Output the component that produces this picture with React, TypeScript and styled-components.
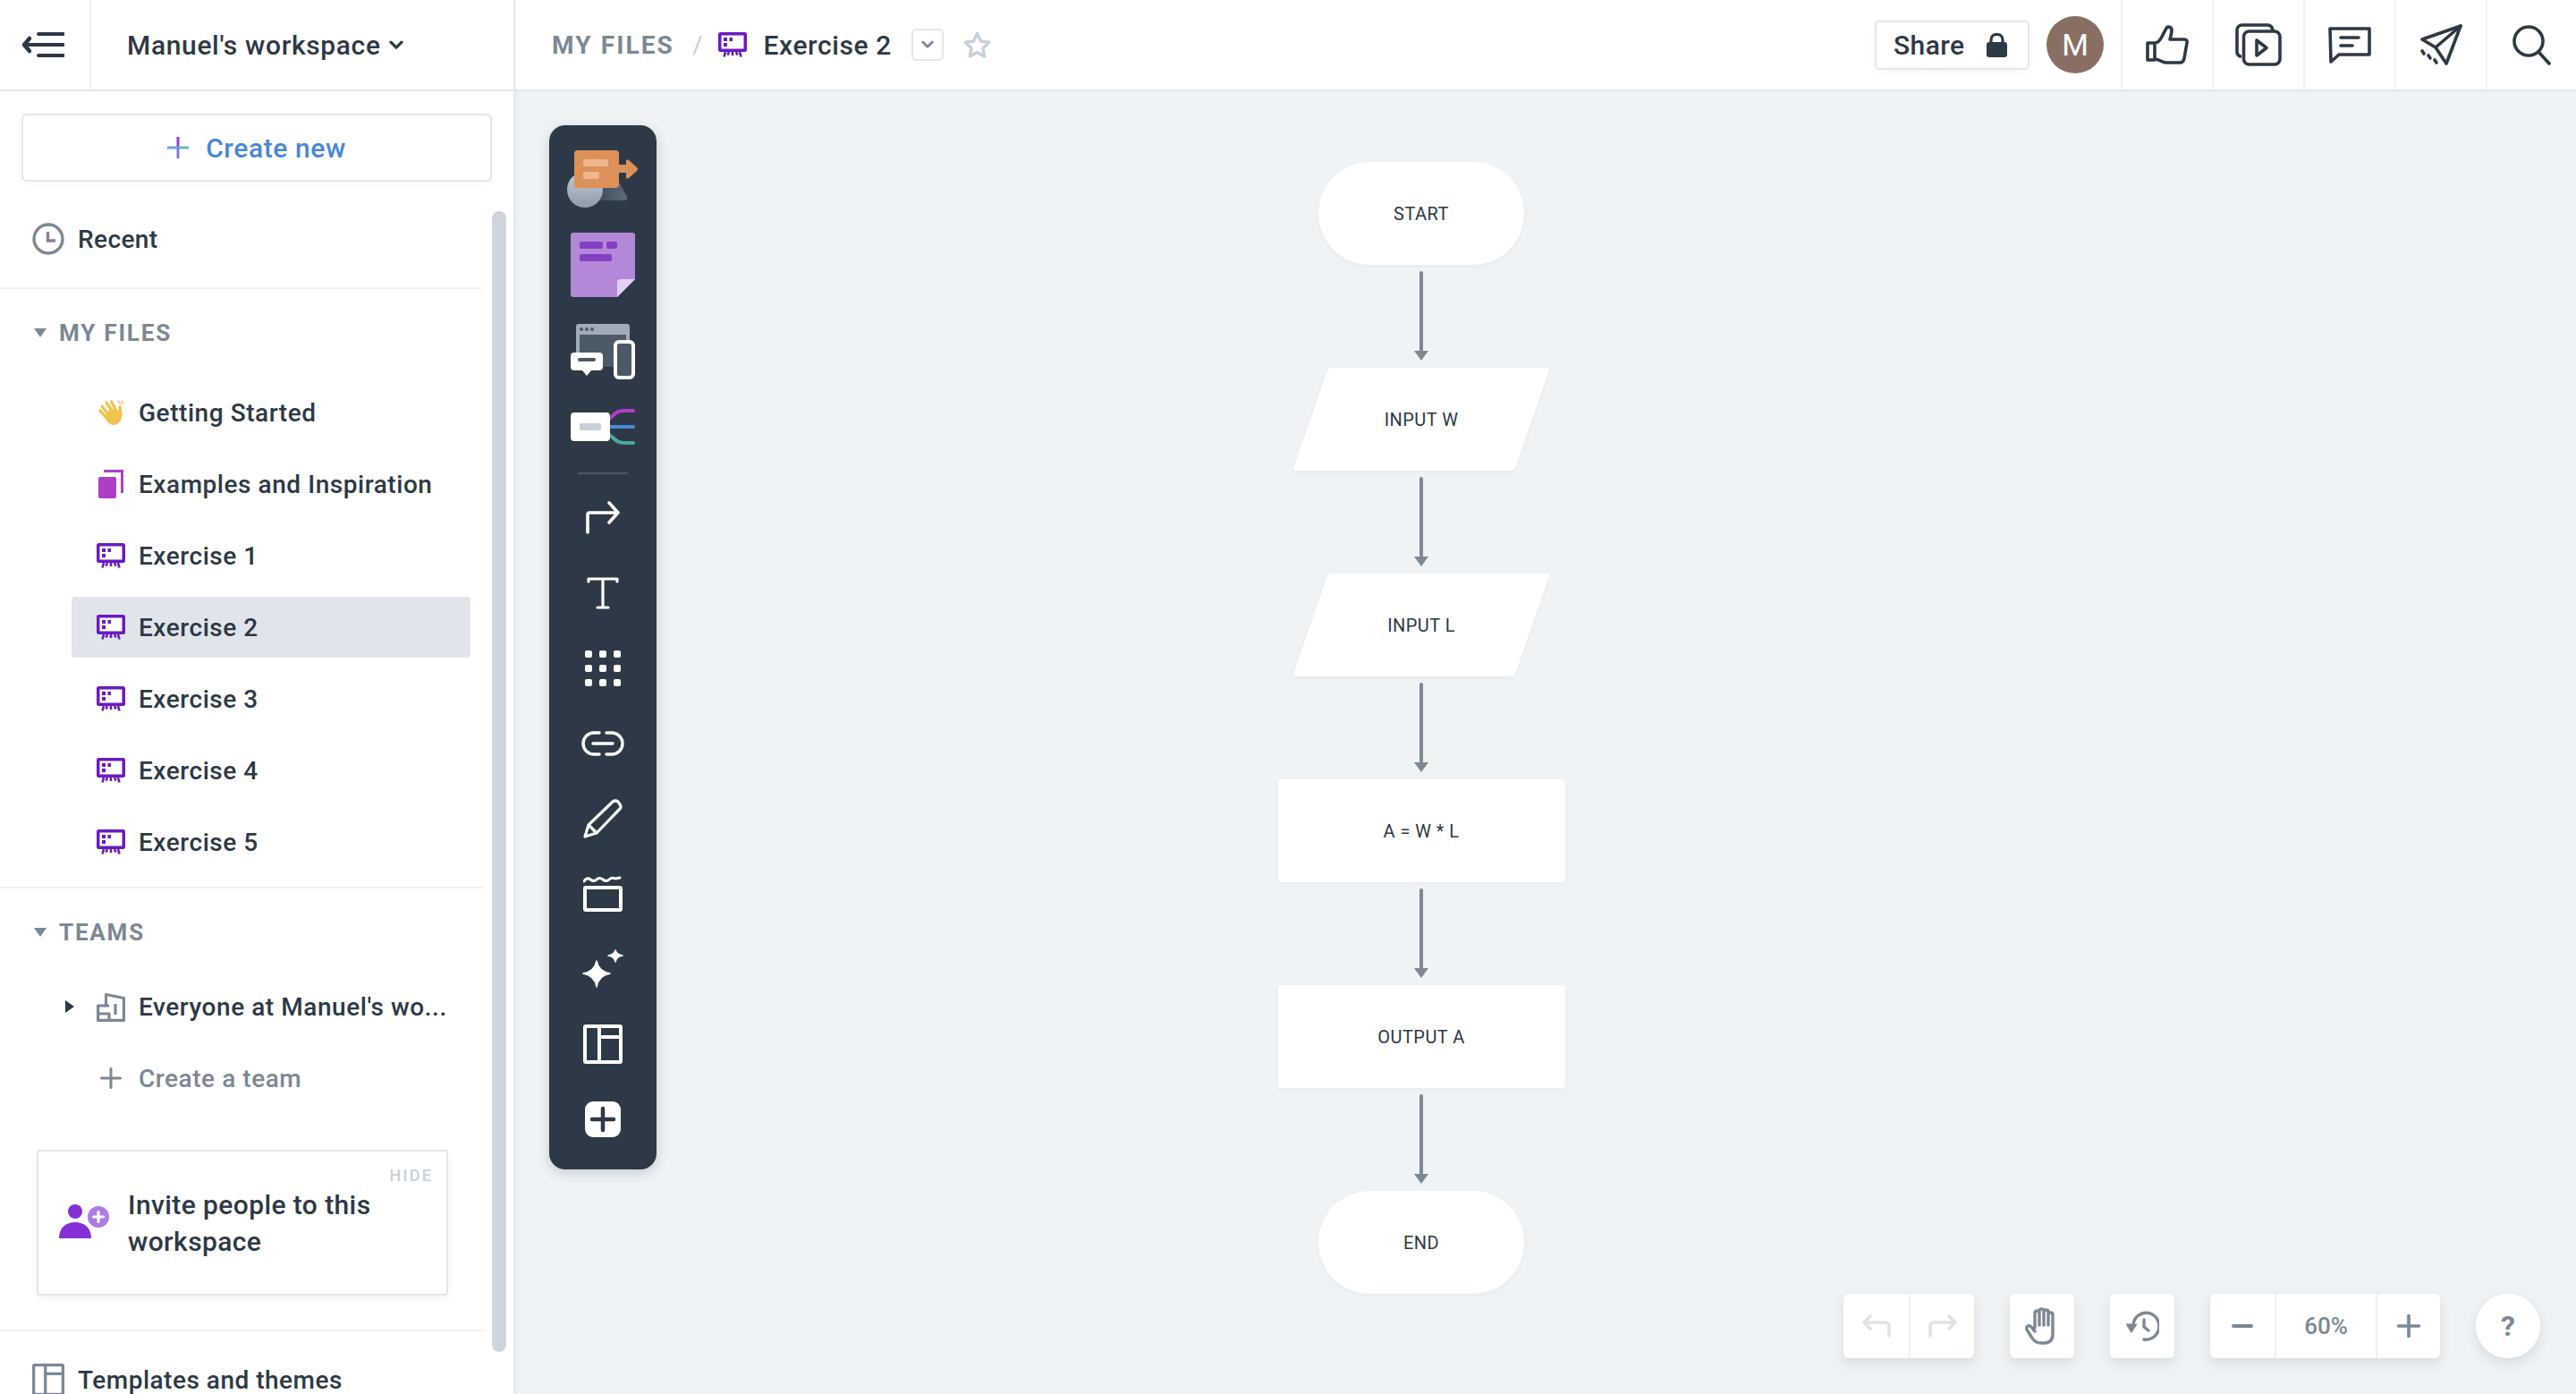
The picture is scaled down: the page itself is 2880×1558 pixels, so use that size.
import * as React from 'react'
import styled, { createGlobalStyle } from 'styled-components'

const ink = '#2d3946'
const gray = '#7c8895'
const line = '#e3e7ec'

const Global = createGlobalStyle`
  * { box-sizing: border-box; }
  html, body { margin: 0; padding: 0; background: #eff3f6; }
  body {
    font-family: Roboto, "Noto Sans", "Liberation Sans", sans-serif;
    color: ${ink};
    -webkit-font-smoothing: antialiased;
  }
  svg { display: block; flex: none; }
`

const Page = styled.div`
  display: flex;
  width: 2880px;
  height: 1558px;
  overflow: hidden;
`

/* ---------- sidebar ---------- */

const Sidebar = styled.aside`
  position: relative;
  z-index: 2;
  flex: none;
  width: 576px;
  height: 100%;
  overflow: hidden;
  background: #fff;
  border-right: 2px solid ${line};
  box-shadow: 2px 0 4px rgba(45, 57, 70, 0.05);
`

const SideHeader = styled.div`
  display: flex;
  height: 102px;
  border-bottom: 2px solid ${line};
`

const BackCell = styled.div`
  display: flex;
  align-items: center;
  width: 102px;
  padding-left: 24px;
  border-right: 2px solid #eef1f5;
`

const WorkspaceName = styled.div`
  display: flex;
  align-items: center;
  gap: 9px;
  padding-left: 40px;
  font-size: 30px;
  font-weight: 500;
  letter-spacing: 0.65px;
`

const CreateButton = styled.div`
  display: flex;
  align-items: center;
  justify-content: center;
  gap: 19px;
  width: 526px;
  height: 76px;
  margin: 25px 0 0 24px;
  border: 2px solid ${line};
  border-radius: 6px;
  background: #fff;
  box-shadow: 0 2px 6px rgba(45, 57, 70, 0.05);
  color: #4a86d8;
  font-size: 30px;
  font-weight: 500;
  letter-spacing: 0.6px;
`

const RecentRow = styled.div`
  display: flex;
  align-items: center;
  gap: 15px;
  width: 541px;
  height: 120px;
  padding: 10px 0 0 36px;
  border-bottom: 2px solid #f0f2f5;
  font-size: 28px;
  font-weight: 500;
  letter-spacing: 0.4px;
`

const SectionTitle = styled.div<{ $h: number; $pb?: number }>`
  display: flex;
  align-items: center;
  gap: 14px;
  height: ${(p) => p.$h}px;
  padding: 0 0 ${(p) => p.$pb ?? 0}px 38px;
  color: ${gray};
  font-size: 26px;
  font-weight: 700;
  letter-spacing: 1.8px;
`

const Caret = styled.span`
  width: 0;
  height: 0;
  border-left: 7px solid transparent;
  border-right: 7px solid transparent;
  border-top: 10px solid ${gray};
`

const FileList = styled.div<{ $ruled?: boolean }>`
  display: flex;
  flex-direction: column;
  gap: 12px;
  width: 541px;
  padding-bottom: ${(p) => (p.$ruled ? '16px' : '0')};
  border-bottom: ${(p) => (p.$ruled ? '2px solid #f0f2f5' : 'none')};
`

const FileRow = styled.div<{ $active?: boolean; $muted?: boolean }>`
  position: relative;
  display: flex;
  align-items: center;
  width: 446px;
  height: 68px;
  margin-left: 80px;
  padding-left: 28px;
  border-radius: 4px;
  background: ${(p) => (p.$active ? '#e0e5ec' : 'transparent')};
  color: ${(p) => (p.$muted ? gray : ink)};
  font-size: 28px;
  font-weight: 500;
  letter-spacing: 0.55px;
  white-space: nowrap;
`

const IconSlot = styled.span`
  display: flex;
  align-items: center;
  justify-content: center;
  width: 32px;
  margin-right: 15px;
`

const ExpandCaret = styled.span`
  position: absolute;
  left: -7px;
  top: 27px;
  width: 0;
  height: 0;
  border-top: 7px solid transparent;
  border-bottom: 7px solid transparent;
  border-left: 10px solid ${ink};
`

const InviteCard = styled.div`
  position: relative;
  display: flex;
  align-items: flex-start;
  gap: 21px;
  width: 460px;
  height: 163px;
  margin: 46px 0 38px 41px;
  padding: 39px 0 0 23px;
  border: 2px solid ${line};
  border-radius: 4px;
  box-shadow: 0 3px 8px rgba(45, 57, 70, 0.06);
  font-size: 30px;
  font-weight: 500;
  line-height: 41px;
  letter-spacing: 0.4px;
`

const HideLabel = styled.span`
  position: absolute;
  top: 16px;
  right: 15px;
  color: #c7d0db;
  font-size: 18px;
  font-weight: 500;
  line-height: 22px;
  letter-spacing: 2.2px;
`

const PeopleSlot = styled.div`
  padding-top: 20px;
`

const TemplatesRow = styled.div`
  display: flex;
  align-items: center;
  gap: 15px;
  width: 541px;
  height: 110px;
  padding-left: 36px;
  border-top: 2px solid #f0f2f5;
  font-size: 28px;
  font-weight: 500;
  letter-spacing: 0.5px;
`

const ScrollThumb = styled.div`
  position: absolute;
  left: 550px;
  top: 236px;
  width: 16px;
  height: 1275px;
  border-radius: 8px;
  background: #cfd5dd;
`

/* ---------- top bar ---------- */

const Main = styled.main`
  display: flex;
  flex: 1;
  flex-direction: column;
  min-width: 0;
`

const TopBar = styled.header`
  display: flex;
  flex: none;
  align-items: center;
  height: 102px;
  padding-left: 41px;
  background: #fff;
  border-bottom: 2px solid ${line};
  box-shadow: 0 2px 6px rgba(45, 57, 70, 0.06);
`

const Crumb = styled.span`
  color: ${gray};
  font-size: 28px;
  font-weight: 700;
  letter-spacing: 2.1px;
`

const Slash = styled.span`
  margin: 0 18px 0 20px;
  color: #c7d0db;
  font-size: 28px;
`

const DocTitle = styled.span`
  margin-left: 18px;
  font-size: 30px;
  font-weight: 500;
  letter-spacing: 0.6px;
`

const MenuBox = styled.span`
  display: flex;
  align-items: center;
  justify-content: center;
  width: 36px;
  height: 36px;
  margin: 0 22px;
  border: 2px solid ${line};
  border-radius: 5px;
`

const TopActions = styled.div`
  display: flex;
  align-items: center;
  height: 100%;
  margin-left: auto;
  margin-right: -1px;
`

const ShareButton = styled.div`
  display: flex;
  align-items: center;
  gap: 25px;
  width: 173px;
  height: 55px;
  padding-left: 19px;
  border: 2px solid ${line};
  border-radius: 5px;
  box-shadow: 0 2px 6px rgba(45, 57, 70, 0.05);
  font-size: 30px;
  font-weight: 500;
  letter-spacing: 0.4px;
`

const Avatar = styled.div`
  display: flex;
  align-items: center;
  justify-content: center;
  width: 64px;
  height: 64px;
  margin: 0 19px;
  border-radius: 50%;
  background: #896f63;
  color: #fff;
  font-size: 34px;
`

const ActionCell = styled.div`
  display: flex;
  align-items: center;
  justify-content: center;
  width: 102px;
  height: 100%;
  border-left: 2px solid #eef1f5;
`

/* ---------- canvas ---------- */

const Canvas = styled.section`
  position: relative;
  flex: 1;
  background: #eff3f6;
`

const Flow = styled.div`
  display: flex;
  flex-direction: column;
  align-items: center;
  width: 322px;
  margin-left: 852px;
  padding-top: 79px;
`

const Node = styled.div<{ $kind: 'pill' | 'rect' | 'para' }>`
  position: relative;
  display: flex;
  align-items: center;
  justify-content: center;
  flex: none;
  width: ${(p) => (p.$kind === 'pill' ? 230 : p.$kind === 'rect' ? 321 : 288)}px;
  height: 115px;
  border-radius: ${(p) => (p.$kind === 'pill' ? '58px' : '4px')};
  background: ${(p) => (p.$kind === 'para' ? 'transparent' : '#fff')};
  box-shadow: ${(p) => (p.$kind === 'para' ? 'none' : '0 2px 5px rgba(45, 57, 70, 0.04)')};
  font-size: 20px;
  font-weight: 400;
  letter-spacing: 0.45px;

  &::before {
    content: ${(p) => (p.$kind === 'para' ? "''" : 'none')};
    position: absolute;
    inset: 0 20px;
    border-radius: 4px;
    background: #fff;
    box-shadow: 0 2px 5px rgba(45, 57, 70, 0.04);
    transform: skewX(-19.2deg);
  }
`

const NodeLabel = styled.span`
  position: relative;
`

const ArrowSlot = styled.div`
  flex: none;
  height: 115px;
  padding-top: 7px;
`

const Toolbar = styled.nav`
  position: absolute;
  left: 38px;
  top: 38px;
  display: flex;
  flex-direction: column;
  align-items: center;
  width: 120px;
  height: 1167px;
  padding-top: 28px;
  border-radius: 18px;
  background: ${ink};
  box-shadow: 0 4px 14px rgba(45, 57, 70, 0.2);
`

const ToolSlot = styled.div<{ $h: number }>`
  display: flex;
  align-items: center;
  justify-content: center;
  flex: none;
  width: 100%;
  height: ${(p) => p.$h}px;
`

const ToolDivider = styled.div`
  flex: none;
  width: 56px;
  height: 2px;
  margin-bottom: 7px;
  background: #4c5a67;
`

const BottomTools = styled.div`
  position: absolute;
  right: 40px;
  bottom: 40px;
  display: flex;
  gap: 40px;
`

const ToolGroup = styled.div<{ $round?: boolean }>`
  display: flex;
  height: 72px;
  overflow: hidden;
  border-radius: ${(p) => (p.$round ? '50%' : '6px')};
  background: #fff;
  box-shadow: 0 6px 14px rgba(45, 57, 70, 0.12);
`

const ToolCell = styled.div<{ $w: number }>`
  display: flex;
  align-items: center;
  justify-content: center;
  width: ${(p) => p.$w}px;
  height: 100%;
  color: ${gray};
  font-size: 26px;
  font-weight: 500;

  & + & {
    border-left: 2px solid #eef1f5;
  }
`

const HelpMark = styled.span`
  color: ${gray};
  font-size: 32px;
  font-weight: 700;
`

/* ---------- icons ---------- */

const BackIcon = () => (
  <svg width="48" height="30" viewBox="0 0 48 30" fill="none" stroke={ink} strokeLinecap="round" strokeLinejoin="round">
    <path strokeWidth="4" d="M19 3H47M4 15H47M19 27H47" />
    <path strokeWidth="4.5" d="M9 8L3 15L9 22" />
  </svg>
)

const Chevron = ({ size = 16, color = ink }: { size?: number; color?: string }) => (
  <svg width={size} height={size * 0.65} viewBox="0 0 16 10" fill="none" stroke={color} strokeWidth="3.2" strokeLinecap="round" strokeLinejoin="round">
    <path d="M2 2L8 8L14 2" />
  </svg>
)

const RainbowPlus = () => (
  <svg width="24" height="24" viewBox="0 0 24 24">
    <rect x="10.5" y="0" width="3" height="12" fill="#8d3fd6" />
    <rect x="12" y="10.5" width="12" height="3" fill="#68bfae" />
    <rect x="0" y="10.5" width="12" height="3" fill="#6ea3e0" />
    <rect x="10.5" y="12" width="3" height="12" fill="#7c7af0" />
  </svg>
)

const ClockIcon = () => (
  <svg width="36" height="36" viewBox="0 0 36 36" fill="none" stroke={gray}>
    <circle cx="18" cy="18" r="16" strokeWidth="3.4" />
    <path strokeWidth="3.4" d="M17.5 10V20H26" />
  </svg>
)

const WaveIcon = () => (
  <svg width="30" height="30" viewBox="0 0 30 30" fill="none" stroke="#f2c44f" strokeWidth="3.4" strokeLinecap="round">
    <circle cx="18" cy="20" r="9" fill="#f2c44f" stroke="none" />
    <path d="M11 22L3 13M12 17L5 8M16 13L10 4M21 13L15.5 3M26 18L25 9" />
    <path d="M23 2L26 6M27 2L28.5 5" stroke="#e4ad3a" strokeWidth="1.2" />
  </svg>
)

const BookIcon = () => (
  <svg width="28" height="32" viewBox="0 0 28 32">
    <path d="M6 0H28V26H25V3H6Z" fill="#ad3fc7" />
    <rect x="0" y="8" width="20" height="24" rx="2" fill="#ad3fc7" />
  </svg>
)

const BoardIcon = () => (
  <svg width="32" height="28" viewBox="0 0 32 28">
    <rect x="0" y="0" width="32" height="22" rx="2.5" fill="#6a1bc1" />
    <rect x="3.5" y="3.5" width="25" height="15" fill="#fff" />
    <path d="M6 6H10V10H6ZM12.5 6H16V10H12.5ZM6 12H10V16H6Z" fill="#6a1bc1" />
    <path d="M8 22L6.5 27.5M16 22V26M24 22L25.5 27.5M12 22L10.5 25.5M20 22L21.5 25.5" stroke="#6a1bc1" strokeWidth="2.6" fill="none" />
  </svg>
)

const TeamIcon = () => (
  <svg width="32" height="33" viewBox="0 0 32 33" fill="none" stroke={gray} strokeWidth="3.2" strokeLinejoin="round">
    <path d="M1.6 31.4V15H10.5V2.5L30.4 6.5V31.4Z" />
    <path d="M1.6 24H14V31M14 15H8M21 13V25" />
  </svg>
)

const PlusIcon = ({ size = 24, color = gray, width = 3 }: { size?: number; color?: string; width?: number }) => (
  <svg width={size} height={size} viewBox="0 0 24 24" fill="none" stroke={color} strokeWidth={width} strokeLinecap="round">
    <path d="M12 1.5V22.5M1.5 12H22.5" />
  </svg>
)

const PeopleIcon = () => (
  <svg width="56" height="38" viewBox="0 0 56 38">
    <circle cx="18" cy="8" r="8" fill="#8330d6" />
    <path d="M0 38C0 26 8 20 18 20C28 20 36 26 36 38Z" fill="#8330d6" />
    <circle cx="44" cy="14" r="12" fill="#ad7be3" />
    <path d="M44 8.5V19.5M38.5 14H49.5" stroke="#fff" strokeWidth="3.2" strokeLinecap="round" />
  </svg>
)

const TableIcon = ({ w, h, color, sw }: { w: number; h: number; color: string; sw: number }) => (
  <svg width={w} height={h} viewBox="0 0 44 44" fill="none" stroke={color} strokeWidth={sw} preserveAspectRatio="none">
    <rect x="2" y="2" width="40" height="40" rx="1" />
    <path d="M18 2V42M18 14H42" />
  </svg>
)

const StarIcon = () => (
  <svg width="31" height="31" viewBox="0 0 31 31" fill="none" stroke="#c7d0db" strokeWidth="3.4" strokeLinejoin="round">
    <path d="M15.5 2.5L19.5 11L28.8 12.3L22 18.7L23.7 28L15.5 23.5L7.3 28L9 18.7L2.2 12.3L11.5 11Z" />
  </svg>
)

const LockIcon = () => (
  <svg width="23" height="27" viewBox="0 0 23 27">
    <path d="M5 12V7.5C5 3.5 8 1.5 11.5 1.5C15 1.5 18 3.5 18 7.5V12" fill="none" stroke={ink} strokeWidth="3.2" />
    <rect x="0" y="10" width="23" height="17" rx="3" fill={ink} />
  </svg>
)

const stroke = { fill: 'none', stroke: ink, strokeWidth: 3.6, strokeLinecap: 'round', strokeLinejoin: 'round' } as const

const ThumbIcon = () => (
  <svg width="48" height="44" viewBox="0 0 48 44" {...stroke}>
    <path d="M10 20H2V39H10M10 20C14 20 16 17 18 13L23 3.5C24.5 1 29 2 29 6C29 9 28 12 27 16H43C45.5 16 46.5 17.5 46 20L43 37C42.5 40.5 41 42 38 42H23C18 42 15 38 10 38Z" />
  </svg>
)

const VideoIcon = () => (
  <svg width="52" height="48" viewBox="0 0 52 48" {...stroke}>
    <path d="M5.5 37C3 36 2 34.5 2 32V8C2 4.5 4 2 8 2H36C39.5 2 41.5 4.5 42 8" />
    <rect x="9.5" y="9" width="40.5" height="37" rx="6" />
    <path d="M24 19V36L35 27.5Z" />
  </svg>
)

const CommentIcon = () => (
  <svg width="48" height="42" viewBox="0 0 48 42" {...stroke}>
    <path d="M2 3H46V32H12L3 40Z" />
    <path d="M14 13H34M14 22H27" />
  </svg>
)

const PlaneIcon = () => (
  <svg width="48" height="46" viewBox="0 0 48 46" {...stroke}>
    <path d="M46 2L3 17L18 26L30 44Z" />
    <path d="M46 2L18 26" />
    <path d="M3 30L5 33M10 35L12 38M17 40L19 43" />
  </svg>
)

const SearchIcon = () => (
  <svg width="44" height="45" viewBox="0 0 44 45" {...stroke}>
    <circle cx="18" cy="18" r="16" />
    <path d="M30 31L41 43" />
  </svg>
)

const FlowArrow = () => (
  <svg width="16" height="100" viewBox="0 0 16 100">
    <rect x="6" y="0" width="4" height="90" rx="2" fill={gray} />
    <path d="M0 89H16L8 100Z" fill={gray} strokeLinejoin="round" />
  </svg>
)

const ShapesTool = () => (
  <svg width="80" height="64" viewBox="0 0 80 64">
    <defs>
      <linearGradient id="circ" x1="0" y1="0" x2="0" y2="1">
        <stop offset="0" stopColor="#c0cad3" />
        <stop offset="1" stopColor="#8f9ca9" />
      </linearGradient>
      <linearGradient id="tri" x1="0" y1="0" x2="1" y2="0">
        <stop offset="0" stopColor="#3c4956" />
        <stop offset="1" stopColor="#5d6a77" />
      </linearGradient>
    </defs>
    <path d="M30 20H50L67 52Q68 56 64 56H30Z" fill="url(#tri)" />
    <circle cx="20" cy="44" r="20" fill="url(#circ)" />
    <path d="M56 16H66V12Q66 9 69 11L78 19Q80 21 78 23L69 31Q66 33 66 30V25H56Z" fill="#dd9159" />
    <rect x="8" y="0" width="50" height="42" rx="4" fill="#dd9159" />
    <rect x="18" y="10" width="28" height="8" rx="2" fill="#ecb78f" />
    <rect x="18" y="24" width="18" height="8" rx="2" fill="#ecb78f" />
  </svg>
)

const StickyTool = () => (
  <svg width="72" height="72" viewBox="0 0 72 72">
    <path d="M3 0H69Q72 0 72 3V52L52 72H3Q0 72 0 69V3Q0 0 3 0Z" fill="#b388d8" />
    <rect x="10" y="10" width="26" height="8" rx="2" fill="#8340c4" />
    <rect x="40" y="10" width="12" height="8" rx="2" fill="#8340c4" />
    <rect x="10" y="24" width="36" height="8" rx="2" fill="#8340c4" />
    <path d="M72 52L52 72V56Q52 52 56 52Z" fill="#e3cff2" />
  </svg>
)

const DevicesTool = () => (
  <svg width="72" height="62" viewBox="0 0 72 62">
    <rect x="6" y="0" width="60" height="48" rx="3" fill="#a0adb9" />
    <rect x="10" y="12" width="52" height="36" fill="#4c5a67" />
    <circle cx="12" cy="6" r="2" fill="#4c5a67" />
    <circle cx="18" cy="6" r="2" fill="#4c5a67" />
    <circle cx="24" cy="6" r="2" fill="#4c5a67" />
    <rect x="50" y="20" width="20" height="40" rx="4" fill="#4c5a67" stroke="#fff" strokeWidth="4" />
    <rect x="56" y="18" width="8" height="4" rx="2" fill="#fff" />
    <rect x="0" y="32" width="36" height="20" rx="4" fill="#fff" />
    <path d="M13 52H23L18 58Z" fill="#fff" />
    <rect x="8" y="38" width="20" height="4" rx="2" fill="#4c5a67" />
  </svg>
)

const MindTool = () => (
  <svg width="72" height="40" viewBox="0 0 72 40" fill="none" strokeWidth="4" strokeLinecap="round">
    <path d="M42 12C50 6 50 2 60 2H70" stroke="#ad3fc7" />
    <path d="M42 20H70" stroke="#4a86d8" />
    <path d="M42 28C50 34 52 38 60 38H70" stroke="#4aaaa0" />
    <rect x="0" y="4" width="44" height="32" rx="4" fill="#fff" stroke="none" />
    <rect x="10" y="16" width="24" height="8" rx="2" fill="#c7d0d9" stroke="none" />
  </svg>
)

const white = { fill: 'none', stroke: '#fff', strokeLinecap: 'round', strokeLinejoin: 'round' } as const

const ElbowTool = () => (
  <svg width="40" height="38" viewBox="0 0 40 38" {...white} strokeWidth="3.6">
    <path d="M3 35V15Q3 13 5 13H37M27 2L37 13L27 24" />
  </svg>
)

const TextTool = () => (
  <svg width="36" height="36" viewBox="0 0 36 36" {...white} strokeWidth="3.2">
    <path d="M2 5V2H34V5M18 2V34M12 34H24" />
  </svg>
)

const DotsTool = () => (
  <svg width="40" height="40" viewBox="0 0 40 40" fill="#fff">
    {[0, 16, 32].map((y) =>
      [0, 16, 32].map((x) => <rect key={`${x}-${y}`} x={x} y={y} width="8" height="8" rx="2" />)
    )}
  </svg>
)

const LinkTool = () => (
  <svg width="48" height="28" viewBox="0 0 48 28" {...white} strokeWidth="3.4">
    <path d="M20 2H14A12 12 0 0 0 14 26H20M28 2H34A12 12 0 0 1 34 26H28M13 14H35" />
  </svg>
)

const PencilTool = () => (
  <svg width="44" height="44" viewBox="0 0 44 44" {...white} strokeWidth="3.2">
    <path d="M2 42L6 29L33 3Q36 1 39 3L41 6Q43 9 41 11L15 38ZM6 29L15 38" />
  </svg>
)

const FrameTool = () => (
  <svg width="44" height="40" viewBox="0 0 44 40" fill="none" stroke="#fff">
    <path strokeWidth="3" strokeLinecap="round" d="M1 6Q4 1 8 4T15 4T22 4T29 4T36 3L41 2" />
    <rect x="2" y="13" width="40" height="25" rx="1" strokeWidth="4" />
  </svg>
)

const SparkleTool = () => (
  <svg width="46" height="44" viewBox="0 0 46 44" fill="#fff" stroke="#fff" strokeWidth="1.5" strokeLinejoin="round">
    <path d="M16 13C17.5 21 22 25.5 31 27C22 28.5 17.5 33 16 42C14.5 33 10 28.5 1 27C10 25.5 14.5 21 16 13Z" />
    <path d="M37 1C37.8 4 40 6.2 45 7C40 7.8 37.8 10 37 14C36.2 10 34 7.8 29 7C34 6.2 36.2 4 37 1Z" />
  </svg>
)

const AddTool = () => (
  <svg width="40" height="40" viewBox="0 0 40 40">
    <rect width="40" height="40" rx="9" fill="#fff" />
    <path d="M20 8V32M8 20H32" stroke={ink} strokeWidth="4.5" strokeLinecap="round" />
  </svg>
)

const TurnArrow = ({ flip }: { flip?: boolean }) => (
  <svg width="32" height="26" viewBox="0 0 32 26" fill="none" stroke="#dfe3e7" strokeWidth="3.6" strokeLinecap="round" strokeLinejoin="round">
    <g transform={flip ? 'translate(32 0) scale(-1 1)' : undefined}>
      <path d="M30 24V13Q30 9 26 9H3M9 2L2 9L9 16" />
    </g>
  </svg>
)

const HandIcon = () => (
  <svg width="40" height="42" viewBox="0 0 40 42" fill="none" stroke={gray} strokeWidth="3.4" strokeLinecap="round" strokeLinejoin="round">
    <path d="M12 23V7Q12 4 14.5 4Q17 4 17 7V20M17 6V4Q17 2 19.5 2Q22 2 22 4V20M22 5Q22 3 24.5 3Q27 3 27 5V20M27 8Q27 6 29.5 6Q32 6 32 8V30Q32 40 22 40H18Q12 40 8 33L3 25Q2 22 4 21Q6 20 8 22L12 27" />
  </svg>
)

const HistoryIcon = () => (
  <svg width="38" height="34" viewBox="0 0 38 34" fill="none" stroke={gray} strokeWidth="3.4" strokeLinecap="round" strokeLinejoin="round">
    <path d="M9 15A14.5 15 0 1 1 21 32" />
    <path d="M1.5 15H13L7 24Z" fill={gray} strokeWidth="1" />
    <path d="M21 10V18L26 22" />
  </svg>
)

const boards = ['Exercise 1', 'Exercise 2', 'Exercise 3', 'Exercise 4', 'Exercise 5']
const nodes = [
  { kind: 'pill', label: 'START' },
  { kind: 'para', label: 'INPUT W' },
  { kind: 'para', label: 'INPUT L' },
  { kind: 'rect', label: 'A = W * L' },
  { kind: 'rect', label: 'OUTPUT A' },
  { kind: 'pill', label: 'END' },
] as const

export default function App() {
  return (
    <Page>
      <Global />
      <Sidebar>
        <SideHeader>
          <BackCell>
            <BackIcon />
          </BackCell>
          <WorkspaceName>
            Manuel's workspace
            <Chevron />
          </WorkspaceName>
        </SideHeader>
        <CreateButton>
          <RainbowPlus />
          Create new
        </CreateButton>
        <RecentRow>
          <ClockIcon />
          Recent
        </RecentRow>
        <SectionTitle $h={104} $pb={6}>
          <Caret />
          MY FILES
        </SectionTitle>
        <FileList $ruled>
          <FileRow>
            <IconSlot>
              <WaveIcon />
            </IconSlot>
            Getting Started
          </FileRow>
          <FileRow>
            <IconSlot>
              <BookIcon />
            </IconSlot>
            Examples and Inspiration
          </FileRow>
          {boards.map((name) => (
            <FileRow key={name} $active={name === 'Exercise 2'}>
              <IconSlot>
                <BoardIcon />
              </IconSlot>
              {name}
            </FileRow>
          ))}
        </FileList>
        <SectionTitle $h={98}>
          <Caret />
          TEAMS
        </SectionTitle>
        <FileList>
          <FileRow>
            <ExpandCaret />
            <IconSlot>
              <TeamIcon />
            </IconSlot>
            Everyone at Manuel's wo...
          </FileRow>
          <FileRow $muted>
            <IconSlot>
              <PlusIcon />
            </IconSlot>
            Create a team
          </FileRow>
        </FileList>
        <InviteCard>
          <HideLabel>HIDE</HideLabel>
          <PeopleSlot>
            <PeopleIcon />
          </PeopleSlot>
          <div>
            Invite people to this
            <br />
            workspace
          </div>
        </InviteCard>
        <TemplatesRow>
          <TableIcon w={36} h={36} color={gray} sw={4} />
          Templates and themes
        </TemplatesRow>
        <ScrollThumb />
      </Sidebar>

      <Main>
        <TopBar>
          <Crumb>MY FILES</Crumb>
          <Slash>/</Slash>
          <BoardIcon />
          <DocTitle>Exercise 2</DocTitle>
          <MenuBox>
            <Chevron size={14} color={gray} />
          </MenuBox>
          <StarIcon />
          <TopActions>
            <ShareButton>
              Share
              <LockIcon />
            </ShareButton>
            <Avatar>M</Avatar>
            <ActionCell>
              <ThumbIcon />
            </ActionCell>
            <ActionCell>
              <VideoIcon />
            </ActionCell>
            <ActionCell>
              <CommentIcon />
            </ActionCell>
            <ActionCell>
              <PlaneIcon />
            </ActionCell>
            <ActionCell>
              <SearchIcon />
            </ActionCell>
          </TopActions>
        </TopBar>

        <Canvas>
          <Flow>
            {nodes.map((node, i) => (
              <React.Fragment key={node.label}>
                <Node $kind={node.kind}>
                  <NodeLabel>{node.label}</NodeLabel>
                </Node>
                {i < nodes.length - 1 && (
                  <ArrowSlot>
                    <FlowArrow />
                  </ArrowSlot>
                )}
              </React.Fragment>
            ))}
          </Flow>

          <Toolbar>
            <ToolSlot $h={64}>
              <ShapesTool />
            </ToolSlot>
            <ToolSlot $h={128}>
              <StickyTool />
            </ToolSlot>
            <ToolSlot $h={66}>
              <DevicesTool />
            </ToolSlot>
            <ToolSlot $h={102}>
              <MindTool />
            </ToolSlot>
            <ToolDivider />
            <ToolSlot $h={84}>
              <ElbowTool />
            </ToolSlot>
            <ToolSlot $h={84}>
              <TextTool />
            </ToolSlot>
            <ToolSlot $h={84}>
              <DotsTool />
            </ToolSlot>
            <ToolSlot $h={84}>
              <LinkTool />
            </ToolSlot>
            <ToolSlot $h={84}>
              <PencilTool />
            </ToolSlot>
            <ToolSlot $h={84}>
              <FrameTool />
            </ToolSlot>
            <ToolSlot $h={84}>
              <SparkleTool />
            </ToolSlot>
            <ToolSlot $h={84}>
              <TableIcon w={44} h={44} color="#fff" sw={4} />
            </ToolSlot>
            <ToolSlot $h={84}>
              <AddTool />
            </ToolSlot>
          </Toolbar>

          <BottomTools>
            <ToolGroup>
              <ToolCell $w={73}>
                <TurnArrow />
              </ToolCell>
              <ToolCell $w={73}>
                <TurnArrow flip />
              </ToolCell>
            </ToolGroup>
            <ToolGroup>
              <ToolCell $w={72}>
                <HandIcon />
              </ToolCell>
            </ToolGroup>
            <ToolGroup>
              <ToolCell $w={72}>
                <HistoryIcon />
              </ToolCell>
            </ToolGroup>
            <ToolGroup>
              <ToolCell $w={72}>
                <svg width="24" height="6" viewBox="0 0 24 6">
                  <rect width="24" height="4" y="1" rx="2" fill={gray} />
                </svg>
              </ToolCell>
              <ToolCell $w={113}>60%</ToolCell>
              <ToolCell $w={72}>
                <PlusIcon size={26} width={3.4} />
              </ToolCell>
            </ToolGroup>
            <ToolGroup $round>
              <ToolCell $w={72}>
                <HelpMark>?</HelpMark>
              </ToolCell>
            </ToolGroup>
          </BottomTools>
        </Canvas>
      </Main>
    </Page>
  )
}
